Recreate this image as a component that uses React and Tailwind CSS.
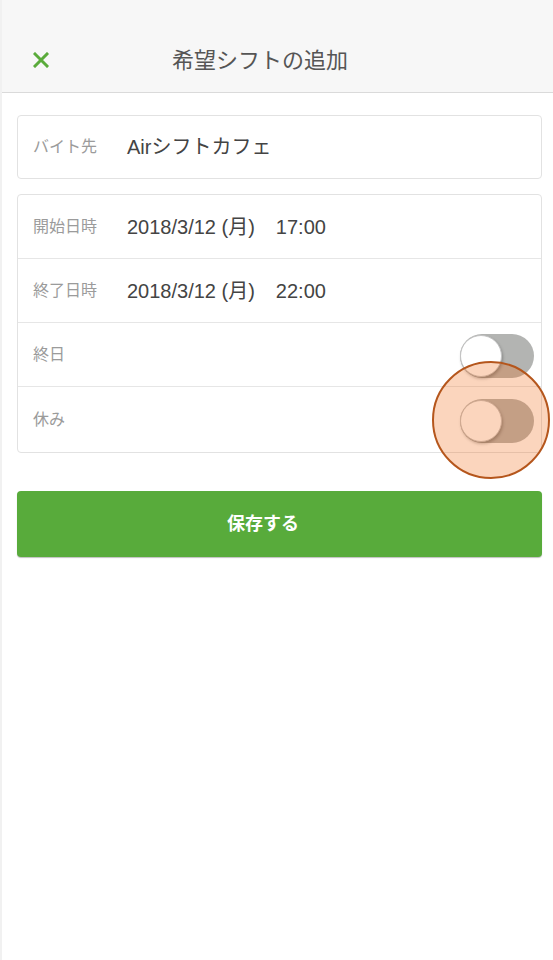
import React, { useState } from 'react';

const labelFont = { fontFamily: '"Liberation Sans", "Noto Sans CJK JP", sans-serif' };

const Toggle = ({ on, onChange, highlight }) => (
  <div className="relative mt-[3px]">
    <button
      type="button"
      onClick={() => onChange(!on)}
      className={`relative block w-[74px] h-[44px] rounded-full ${on ? 'bg-[#58ab3b]' : 'bg-[#b3b4b2]'}`}
    >
      <span
        className={`absolute top-[1px] block w-[42px] h-[42px] rounded-full bg-white border border-[#c4c4c4] shadow-[1px_2px_3px_rgba(0,0,0,0.25)] ${on ? 'left-[31px]' : 'left-0'}`}
      />
    </button>
    {/* tap highlight marker */}
    {highlight && (
      <div className="absolute left-[-28px] top-[-38px] w-[118px] h-[118px] rounded-full border-2 border-[#b5561c] bg-[rgba(240,105,19,0.28)] pointer-events-none" />
    )}
  </div>
);

const Row = ({ label, children, last, h = 'h-[64px]' }) => (
  <div className={`flex items-center ${h} pl-[15px] pr-[7px] ${last ? '' : 'border-b border-[#e6e6e6]'}`}>
    <div className="w-[94px] text-[16px] text-[#9b9b9b]">{label}</div>
    <div className="flex-1 flex items-center text-[20px] text-[#444]">{children}</div>
  </div>
);

export default function App() {
  const [allDay, setAllDay] = useState(false);
  const [dayOff, setDayOff] = useState(false);

  return (
    <div className="min-h-[960px] bg-white border-l-2 border-[#f1f1f1]" style={labelFont}>
      {/* Header */}
      <div className="h-[93px] pt-[28px] bg-[#f7f7f7] border-b border-[#dadada] flex items-center">
        <div className="w-[58px] pl-[31px] flex items-center">
          <svg width="16" height="16" viewBox="0 0 16 16" fill="none" stroke="#5aab3b" strokeWidth="3" strokeLinecap="square">
            <path d="M2 2 L14 14 M14 2 L2 14" />
          </svg>
        </div>
        <div className="flex-1 text-center text-[22px] text-[#555]">希望シフトの追加</div>
        <div className="w-[93px]" />
      </div>

      {/* Workplace */}
      <div className="ml-[15px] mr-[11px] mt-[22px] border border-[#e2e2e2] rounded-[4px]">
        <Row label="バイト先" last h="h-[62px]">
          <span>Airシフトカフェ</span>
        </Row>
      </div>

      {/* Dates */}
      <div className="ml-[15px] mr-[11px] mt-[15px] border border-[#e2e2e2] rounded-[4px]">
        <Row label="開始日時">
          <span>2018/3/12 (月)</span>
          <span className="ml-[21px]">17:00</span>
        </Row>
        <Row label="終了日時">
          <span>2018/3/12 (月)</span>
          <span className="ml-[21px]">22:00</span>
        </Row>
        <Row label="終日">
          <div className="flex-1" />
          <Toggle on={allDay} onChange={setAllDay} />
        </Row>
        <Row label="休み" last h="h-[65px]">
          <div className="flex-1" />
          <Toggle on={dayOff} onChange={setDayOff} highlight />
        </Row>
      </div>

      {/* Save */}
      <div className="ml-[15px] mr-[11px] mt-[38px]">
        <button
          type="button"
          className="w-full h-[66px] rounded-[4px] bg-[#58ab3b] shadow-[0_1px_1px_rgba(0,0,0,0.25)] text-white text-[18px] font-bold pr-[33px]"
        >
          保存する
        </button>
      </div>
    </div>
  );
}
